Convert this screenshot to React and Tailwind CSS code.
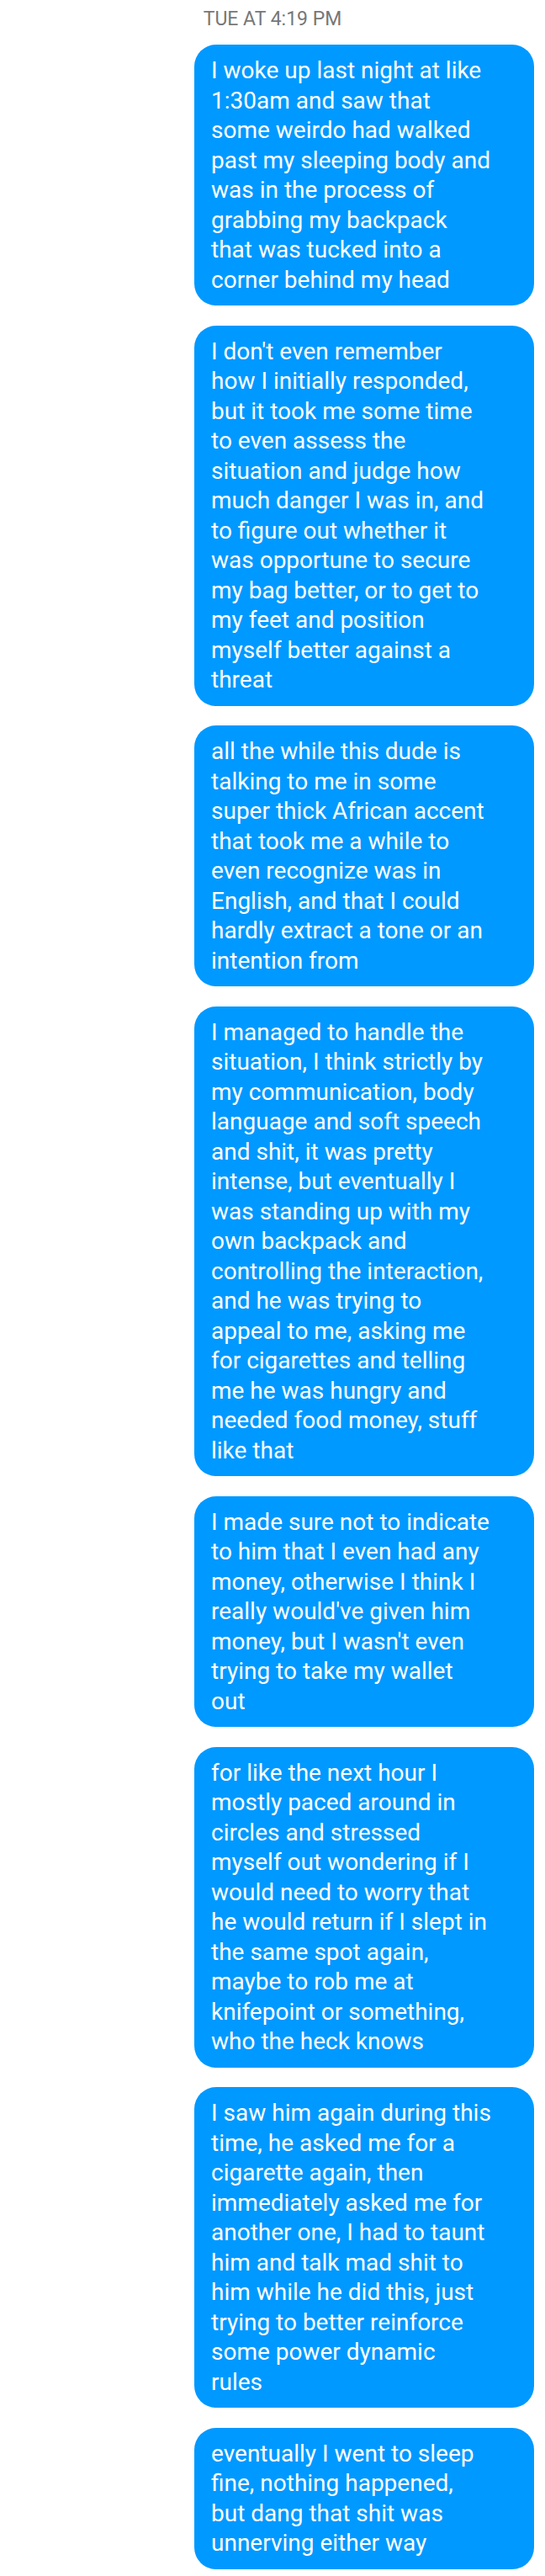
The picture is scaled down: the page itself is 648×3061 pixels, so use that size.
import React from "react";

const messages = [
  [
    "I woke up last night at like",
    "1:30am and saw that",
    "some weirdo had walked",
    "past my sleeping body and",
    "was in the process of",
    "grabbing my backpack",
    "that was tucked into a",
    "corner behind my head",
  ],
  [
    "I don't even remember",
    "how I initially responded,",
    "but it took me some time",
    "to even assess the",
    "situation and judge how",
    "much danger I was in, and",
    "to figure out whether it",
    "was opportune to secure",
    "my bag better, or to get to",
    "my feet and position",
    "myself better against a",
    "threat",
  ],
  [
    "all the while this dude is",
    "talking to me in some",
    "super thick African accent",
    "that took me a while to",
    "even recognize was in",
    "English, and that I could",
    "hardly extract a tone or an",
    "intention from",
  ],
  [
    "I managed to handle the",
    "situation, I think strictly by",
    "my communication, body",
    "language and soft speech",
    "and shit, it was pretty",
    "intense, but eventually I",
    "was standing up with my",
    "own backpack and",
    "controlling the interaction,",
    "and he was trying to",
    "appeal to me, asking me",
    "for cigarettes and telling",
    "me he was hungry and",
    "needed food money, stuff",
    "like that",
  ],
  [
    "I made sure not to indicate",
    "to him that I even had any",
    "money, otherwise I think I",
    "really would've given him",
    "money, but I wasn't even",
    "trying to take my wallet",
    "out",
  ],
  [
    "for like the next hour I",
    "mostly paced around in",
    "circles and stressed",
    "myself out wondering if I",
    "would need to worry that",
    "he would return if I slept in",
    "the same spot again,",
    "maybe to rob me at",
    "knifepoint or something,",
    "who the heck knows",
  ],
  [
    "I saw him again during this",
    "time, he asked me for a",
    "cigarette again, then",
    "immediately asked me for",
    "another one, I had to taunt",
    "him and talk mad shit to",
    "him while he did this, just",
    "trying to better reinforce",
    "some power dynamic",
    "rules",
  ],
  [
    "eventually I went to sleep",
    "fine, nothing happened,",
    "but dang that shit was",
    "unnerving either way",
  ],
];

export default function App() {
  return (
    <div className="w-[648px] min-h-[3061px] bg-white font-['Roboto',_'Liberation_Sans',_sans-serif]">
      <div className="pt-[9px] pb-[16px] text-center text-[23px] leading-[28px] text-[#777777]">
        TUE AT 4:19 PM
      </div>
      <div className="flex flex-col items-end gap-[23.5px] pr-[13px]">
        {messages.map((lines, i) => (
          <div
            key={i}
            className="w-[404px] rounded-[26px] bg-[#0099ff] px-[20px] py-[13px] text-[28px] leading-[35.5px] text-white"
          >
            {lines.map((l, j) => (
              <div key={j} className="whitespace-nowrap">
                {l}
              </div>
            ))}
          </div>
        ))}
      </div>
    </div>
  );
}
